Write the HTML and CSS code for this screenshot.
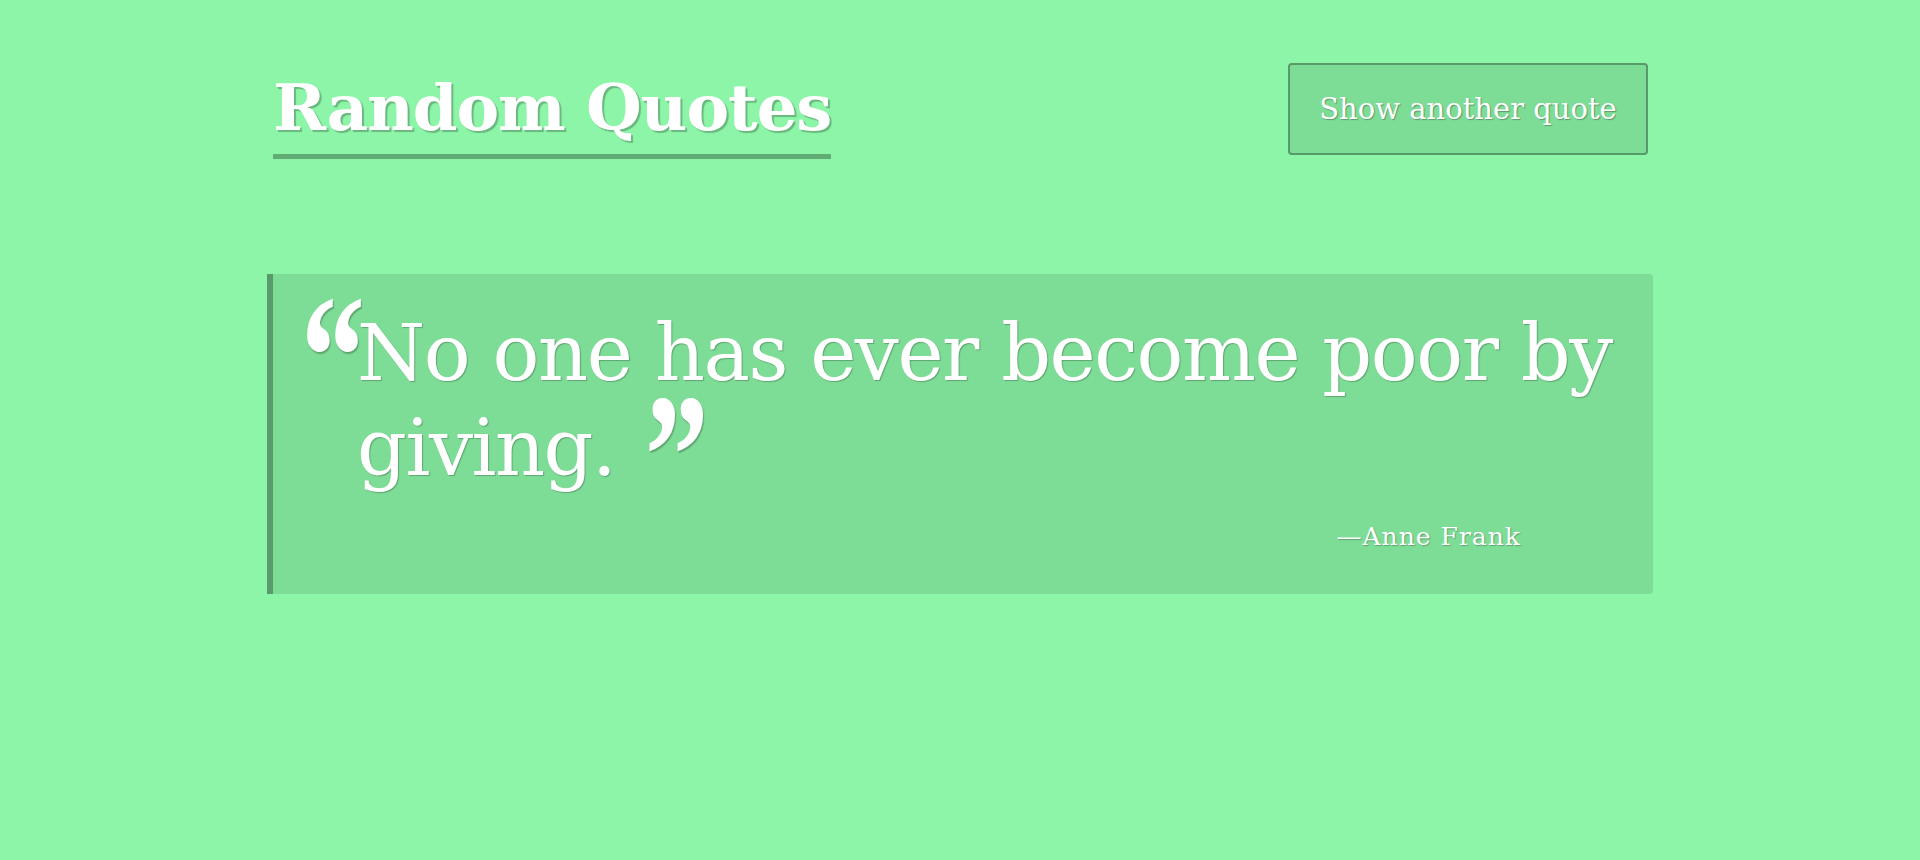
FILE: index.html
```html
<!DOCTYPE html>
<html lang="en">
<head>
<meta charset="utf-8">
<title>Random Quotes</title>
<link rel="stylesheet" href="styles.css">
</head>
<body>
<div class="container">
  <header class="header">
    <h1 class="title">Random Quotes</h1>
    <button class="btn" type="button">Show another quote</button>
  </header>
  <blockquote class="quote">
    <p class="quote-text"><span class="mark mark-open">“</span>No one has ever become poor by giving. <span class="mark mark-close">”</span></p>
    <p class="author">—Anne Frank</p>
  </blockquote>
</div>
</body>
</html>
```

FILE: styles.css
```css
html, body {
  margin: 0;
  padding: 0;
}
body {
  background: rgb(140, 245, 168);
  font-family: "DejaVu Serif", "Liberation Serif", serif;
  color: #fff;
  min-height: 860px;
}
.container {
  width: 1386px;
  margin: 0 auto;
}
.header {
  display: flex;
  justify-content: space-between;
  align-items: flex-start;
  padding: 63px 5px 0 6px;
}
.title {
  margin: 3px 0 0 0;
  font-size: 64px;
  line-height: 84px;
  font-weight: bold;
  padding-bottom: 4px;
  border-bottom: 5px solid rgba(0, 0, 0, 0.3);
  text-shadow: 2px 2px 1px rgba(0, 0, 0, 0.25);
  letter-spacing: -1px;
}
.btn {
  width: 360px;
  height: 92px;
  background: rgba(0, 0, 0, 0.1);
  border: 2px solid rgba(0, 0, 0, 0.3);
  border-radius: 4px;
  color: #fff;
  font-family: "DejaVu Serif", "Liberation Serif", serif;
  font-size: 29px;
  text-shadow: 1px 1px 1px rgba(0, 0, 0, 0.3);
  padding: 0;
  cursor: pointer;
}
.quote {
  margin: 115px 0 0 0;
  background: rgba(0, 0, 0, 0.1);
  border-left: 6px solid rgba(0, 0, 0, 0.3);
  border-radius: 0 4px 4px 0;
  padding: 32px 10px 42px 84px;
}
.quote-text {
  margin: 0;
  font-size: 78px;
  line-height: 95px;
  letter-spacing: -1.5px;
  text-shadow: 1px 1px 1px rgba(0, 0, 0, 0.25);
}
.mark {
  display: inline-block;
  font-family: "Liberation Serif", serif;
  font-size: 128px;
  font-weight: bold;
  line-height: 0;
  letter-spacing: 0;
  transform: scaleY(1.38);
}
.mark-open {
  width: 56px;
  margin-left: -56px;
  vertical-align: -20px;
}
.mark-close {
  margin-left: 6px;
  vertical-align: -24px;
}
.author {
  margin: 26px 0 0 0;
  font-size: 25px;
  line-height: 30px;
  text-align: right;
  padding-right: 122px;
  text-shadow: 1px 1px 1px rgba(0, 0, 0, 0.25);
  letter-spacing: 1px;
}
```
